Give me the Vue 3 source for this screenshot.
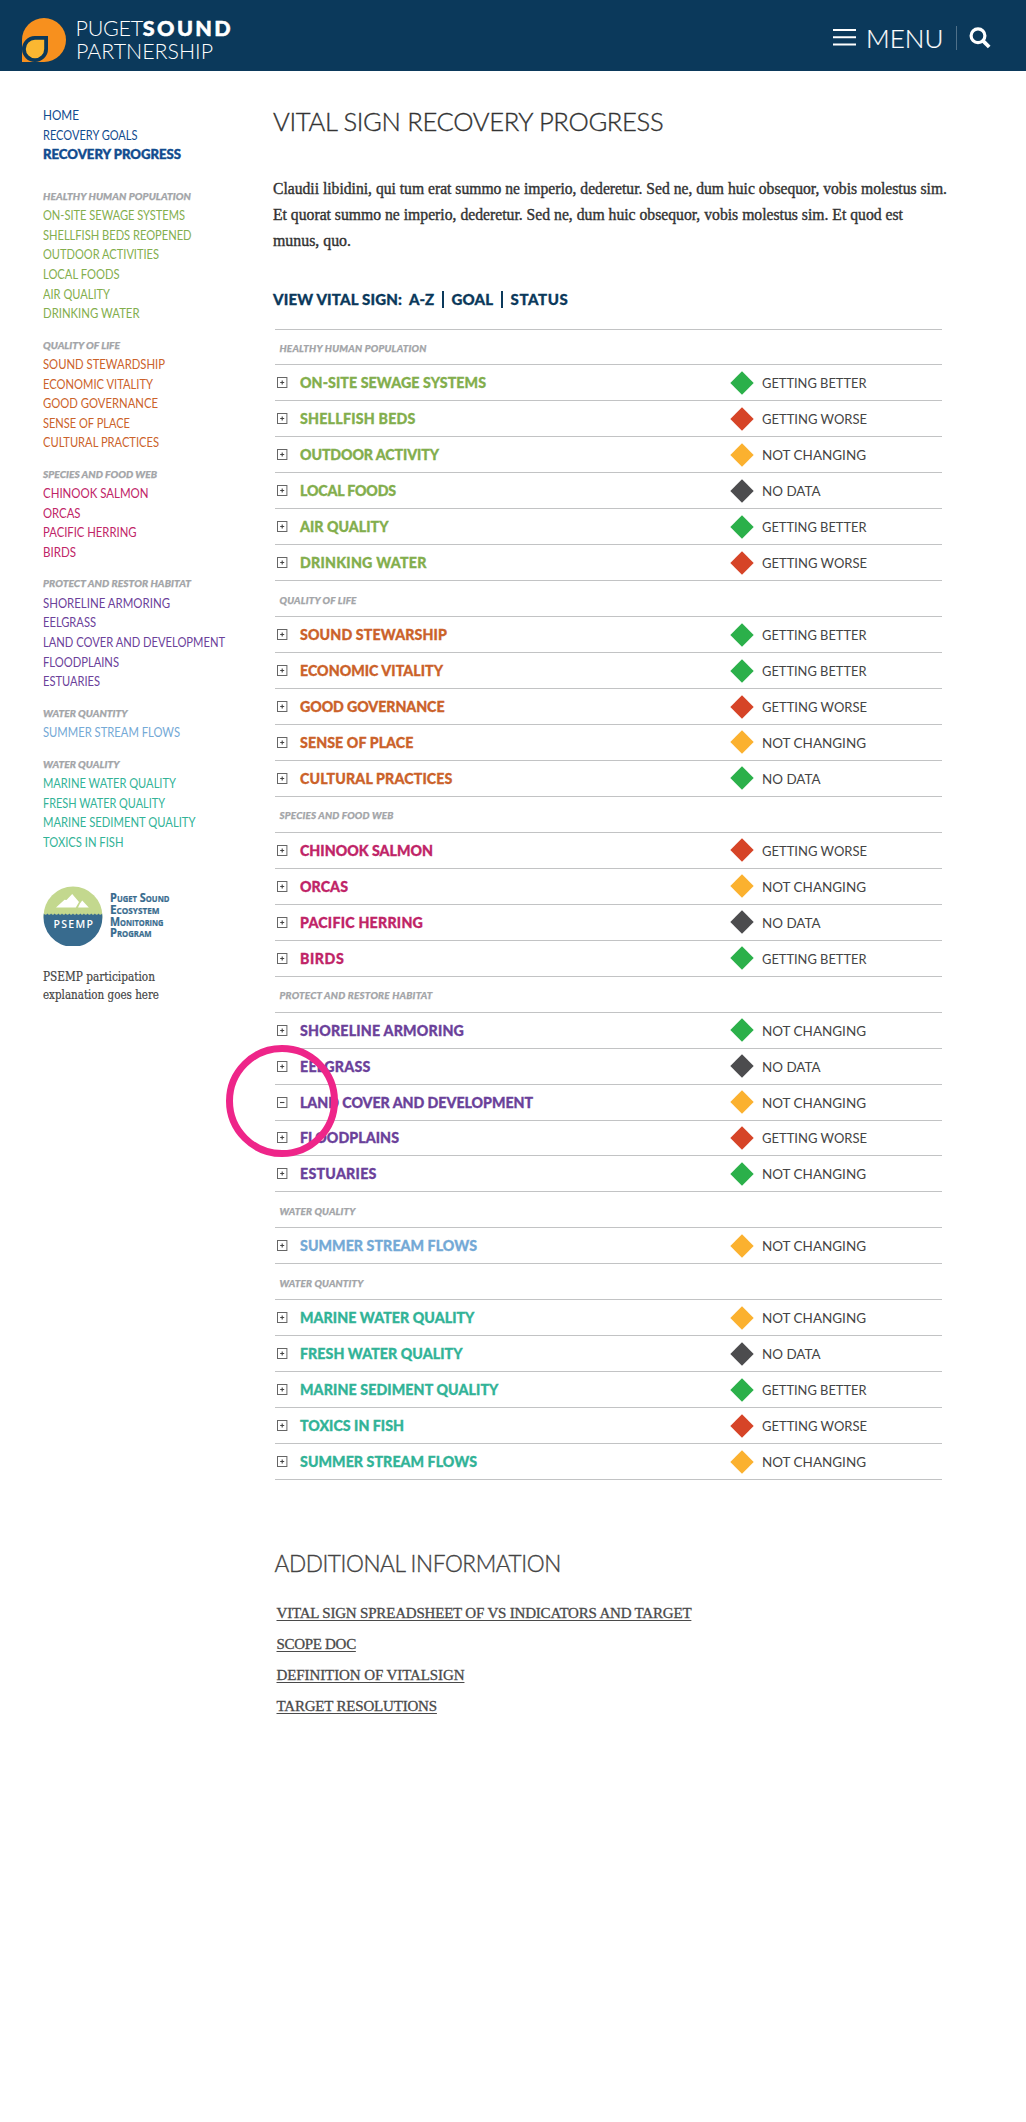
<script setup>
// Fits an element's text to the given width: by letter spacing,
// or with the "narrow" modifier by condensing the letters themselves.
const vFit = {
  mounted(el, { value, modifiers }) {
    const natural = el.getBoundingClientRect().width
    if (modifiers.narrow) {
      el.style.transform = `scaleX(${(value / natural).toFixed(4)})`
      return
    }
    const count = el.textContent.length
    el.style.letterSpacing = `${((value - natural) / (count - 0.5)).toFixed(3)}px`
  }
}

const topLinks = [
  { label: 'HOME', w: 36 },
  { label: 'RECOVERY GOALS', w: 94.5 },
  { label: 'RECOVERY PROGRESS', w: 138, current: true }
]

const sideGroups = [
  { title: 'HEALTHY HUMAN POPULATION', w: 148, tone: 'green', items: [
    ['ON-SITE SEWAGE SYSTEMS', 142], ['SHELLFISH BEDS REOPENED', 148.5], ['OUTDOOR ACTIVITIES', 116],
    ['LOCAL FOODS', 76.5], ['AIR QUALITY', 67], ['DRINKING WATER', 96.5]] },
  { title: 'QUALITY OF LIFE', w: 77, tone: 'orange', items: [
    ['SOUND STEWARDSHIP', 122], ['ECONOMIC VITALITY', 110], ['GOOD GOVERNANCE', 115],
    ['SENSE OF PLACE', 87], ['CULTURAL PRACTICES', 116]] },
  { title: 'SPECIES AND FOOD WEB', w: 114, tone: 'pink', items: [
    ['CHINOOK SALMON', 105.5], ['ORCAS', 37.5], ['PACIFIC HERRING', 93.5], ['BIRDS', 33]] },
  { title: 'PROTECT AND RESTOR HABITAT', w: 148, tone: 'purple', items: [
    ['SHORELINE ARMORING', 127], ['EELGRASS', 53], ['LAND COVER AND DEVELOPMENT', 182],
    ['FLOODPLAINS', 76], ['ESTUARIES', 57]] },
  { title: 'WATER QUANTITY', w: 84.5, tone: 'blue', items: [['SUMMER STREAM FLOWS', 137]] },
  { title: 'WATER QUALITY', w: 76.5, tone: 'teal', items: [
    ['MARINE WATER QUALITY', 133], ['FRESH WATER QUALITY', 122],
    ['MARINE SEDIMENT QUALITY', 152.5], ['TOXICS IN FISH', 80.5]] }
]

const statuses = {
  better: { label: 'GETTING BETTER', w: 104.5 },
  worse: { label: 'GETTING WORSE', w: 105 },
  same: { label: 'NOT CHANGING', w: 104 },
  none: { label: 'NO DATA', w: 58.5 }
}

// Each item: name, width, diamond colour, status
const signGroups = [
  { title: 'HEALTHY HUMAN POPULATION', w: 147, tone: 'green', items: [
    ['ON-SITE SEWAGE SYSTEMS', 186, 'd-green', 'better'], ['SHELLFISH BEDS', 115.5, 'd-red', 'worse'],
    ['OUTDOOR ACTIVITY', 139, 'd-amber', 'same'], ['LOCAL FOODS', 96, 'd-grey', 'none'],
    ['AIR QUALITY', 88.5, 'd-green', 'better'], ['DRINKING WATER', 126.5, 'd-red', 'worse']] },
  { title: 'QUALITY OF LIFE', w: 77, tone: 'orange', items: [
    ['SOUND STEWARSHIP', 147, 'd-green', 'better'], ['ECONOMIC VITALITY', 143, 'd-green', 'better'],
    ['GOOD GOVERNANCE', 144.5, 'd-red', 'worse'], ['SENSE OF PLACE', 113.5, 'd-amber', 'same'],
    ['CULTURAL PRACTICES', 152.5, 'd-green', 'none']] },
  { title: 'SPECIES AND FOOD WEB', w: 114, tone: 'pink', items: [
    ['CHINOOK SALMON', 133, 'd-red', 'worse'], ['ORCAS', 48, 'd-amber', 'same'],
    ['PACIFIC HERRING', 123, 'd-grey', 'none'], ['BIRDS', 44, 'd-green', 'better']] },
  { title: 'PROTECT AND RESTORE HABITAT', w: 153, tone: 'purple', items: [
    ['SHORELINE ARMORING', 164, 'd-green', 'same'], ['EELGRASS', 70.5, 'd-grey', 'none'],
    ['LAND COVER AND DEVELOPMENT', 233, 'd-amber', 'same', true], ['FLOODPLAINS', 99, 'd-red', 'worse'],
    ['ESTUARIES', 76.5, 'd-green', 'same']] },
  { title: 'WATER QUALITY', w: 76, tone: 'blue', items: [['SUMMER STREAM FLOWS', 177, 'd-amber', 'same']] },
  { title: 'WATER QUANTITY', w: 84, tone: 'teal', items: [
    ['MARINE WATER QUALITY', 174.5, 'd-amber', 'same'], ['FRESH WATER QUALITY', 162.5, 'd-grey', 'none'],
    ['MARINE SEDIMENT QUALITY', 198.5, 'd-green', 'better'], ['TOXICS IN FISH', 104, 'd-red', 'worse'],
    ['SUMMER STREAM FLOWS', 177, 'd-amber', 'same']] }
]

const paragraph = [
  ['Claudii libidini, qui tum erat summo ne imperio, dederetur. Sed ne, dum huic obsequor, vobis molestus sim.', 674],
  ['Et quorat summo ne imperio, dederetur. Sed ne, dum huic obsequor, vobis molestus sim. Et quod est', 630],
  ['munus, quo.', 78]
]

const docs = [
  ['VITAL SIGN SPREADSHEET OF VS INDICATORS AND TARGET', 415],
  ['SCOPE DOC', 79.5],
  ['DEFINITION OF VITALSIGN', 188],
  ['TARGET RESOLUTIONS', 160.5]
]
</script>

<template>
  <div class="page">
    <header class="bar">
      <a class="brand">
        <svg class="mark" width="44" height="44" viewBox="0 0 44 44">
          <path d="M0 22A22 22 0 1 1 22 44H0Z" fill="#f7901e" />
          <path d="M26 18V31.2A13 13 0 1 1 12.8 18Z" fill="#0b395b" />
          <path d="M22.2 21.8V31A9.2 9.2 0 1 1 13 21.8Z" fill="#fbb731" />
        </svg>
        <span class="wordmark">
          <span class="line"><span v-fit="67.5" class="t">PUGET</span><b v-fit="89" class="t">SOUND</b></span>
          <span class="line"><span v-fit.narrow="137" class="t">PARTNERSHIP</span></span>
        </span>
      </a>
      <div class="tools">
        <svg width="23" height="17" viewBox="0 0 23 17"><path d="M0 1h23M0 8.2h23M0 15.4h23" stroke="#fff" stroke-width="2" /></svg>
        <span class="menu"><span v-fit.narrow="77.5" class="t">MENU</span></span>
        <i class="divider"></i>
        <svg width="22" height="22" viewBox="0 0 22 22" fill="none" stroke="#fff">
          <circle cx="9" cy="8.7" r="6.9" stroke-width="3.2" />
          <path d="M13.8 13.6L20.2 20" stroke-width="3.8" />
        </svg>
      </div>
    </header>

    <div class="columns">
      <aside>
        <ul class="top">
          <li v-for="l in topLinks" :key="l.label" :class="{ current: l.current }"><span v-fit.narrow="l.w" class="t">{{ l.label }}</span></li>
        </ul>
        <section v-for="g in sideGroups" :key="g.title" class="group">
          <h4 class="label"><span v-fit="g.w" class="t">{{ g.title }}</span></h4>
          <ul :class="g.tone">
            <li v-for="i in g.items" :key="i[0]"><span v-fit.narrow="i[1]" class="t">{{ i[0] }}</span></li>
          </ul>
        </section>

        <div class="psemp">
          <svg width="60" height="60" viewBox="0 0 60 60">
            <circle cx="30" cy="30" r="29.4" fill="#c3d88e" />
            <path d="M.8 27.6q1.8 2.4 3.6 0q1.8 2.4 3.7 0q1.8 2.4 3.6 0q1.8 2.4 3.7 0q1.8 2.4 3.6 0q1.8 2.4 3.7 0q1.8 2.4 3.6 0q1.8 2.4 3.7 0q1.8 2.4 3.6 0q1.8 2.4 3.7 0q1.8 2.4 3.6 0q1.8 2.4 3.7 0q1.8 2.4 3.6 0q1.8 2.4 3.7 0q1.8 2.4 3.6 0q1.8 2.4 3.6 0A29.4 29.4 0 1 1 .8 27.6Z" fill="#386b8e" />
            <path d="M13 21.5L21.5 13.8L23.5 14L29.2 8L36 16L32.8 21.5Z" fill="#fff" />
            <path d="M35 21.5L37 17.5L39.2 14.6L45.8 21.5Z" fill="#fff" />
            <text x="10.5" y="42" textLength="39.5" class="acronym">PSEMP</text>
          </svg>
          <div class="program">
            <div><span v-fit.narrow="59.5" class="t">Puget Sound</span></div>
            <div><span v-fit.narrow="49.5" class="t">Ecosystem</span></div>
            <div><span v-fit.narrow="53.5" class="t">Monitoring</span></div>
            <div><span v-fit.narrow="41.5" class="t">Program</span></div>
          </div>
        </div>
        <p class="note">
          <span v-fit.narrow="112" class="t">PSEMP participation</span><br />
          <span v-fit.narrow="116" class="t">explanation goes here</span>
        </p>
      </aside>

      <main>
        <h1><span v-fit="390.5" class="t">VITAL SIGN RECOVERY PROGRESS</span></h1>
        <p class="intro"><template v-for="p in paragraph" :key="p[0]"><span v-fit.narrow="p[1]" class="t">{{ p[0] }}</span><br /></template></p>

        <div class="views">
          <span v-fit="129" class="t">VIEW VITAL SIGN:</span>
          <span v-fit="25" class="t az">A-Z</span><i></i>
          <span v-fit="41.5" class="t">GOAL</span><i></i>
          <span v-fit="57.5" class="t">STATUS</span>
        </div>

        <div class="signs">
          <template v-for="g in signGroups" :key="g.title">
            <h4 class="row label"><span v-fit="g.w" class="t">{{ g.title }}</span></h4>
            <div v-for="i in g.items" :key="i[0]" class="row">
              <span class="toggle">
                <svg width="11" height="11" viewBox="0 0 11 11" fill="none">
                  <rect x=".5" y=".5" width="9.4" height="10" stroke="#666" />
                  <path :d="i[4] ? 'M3 5.5h4.4' : 'M3.2 5.5h4M5.2 3.5v4'" stroke="#444" stroke-width="1.1" />
                </svg>
                <svg v-if="i[4]" class="ring" width="112" height="112" viewBox="0 0 112 112">
                  <circle cx="56" cy="56" r="52.5" fill="none" stroke="#ee2589" stroke-width="7" />
                </svg>
              </span>
              <span class="name" :class="g.tone"><span v-fit="i[1]" class="t">{{ i[0] }}</span></span>
              <svg class="diamond" :class="i[2]" width="24" height="24" viewBox="0 0 24 24"><path d="M12 .3L23.7 12L12 23.7L.3 12Z" /></svg>
              <span class="status"><span v-fit.narrow="statuses[i[3]].w" class="t">{{ statuses[i[3]].label }}</span></span>
            </div>
          </template>
        </div>

        <h2><span v-fit="286.5" class="t">ADDITIONAL INFORMATION</span></h2>
        <ul class="docs">
          <li v-for="d in docs" :key="d[0]"><a v-fit="d[1]" class="t">{{ d[0] }}</a></li>
        </ul>
      </main>
    </div>
  </div>
</template>

<style>
body { margin: 0; background: #fff; }
</style>

<style scoped>
.page { width: 1026px; min-height: 2122px; background: #fff; font-family: Lato, sans-serif; }
.t { display: inline-block; white-space: nowrap; font-kerning: normal; font-variant-ligatures: none; transform-origin: 0 50%; }
ul, h1, h2, h4, p { margin: 0; padding: 0; list-style: none; }

.bar { height: 71px; box-sizing: border-box; background: #0b395b; color: #fff; display: flex; justify-content: space-between; padding: 0 35.5px 0 22px; }
.brand { display: flex; padding-top: 18px; gap: 9.5px; }
.wordmark { font-size: 21.5px; font-weight: 300; line-height: 23px; margin-top: -1.5px; }
.line { display: flex; }
.line b { font-weight: 900; -webkit-text-stroke: .5px; }
.tools { display: flex; align-items: center; padding-top: 4px; }
.menu { font-size: 26px; font-weight: 300; line-height: 30px; margin-left: 10.5px; width: 89.5px; -webkit-text-stroke: .2px; }
.divider { width: 1px; height: 24px; background: #4f7089; margin-right: 12px; }

.columns { display: flex; padding: 34.4px 0 0 43px; }
aside { width: 230px; flex: none; }
aside li { height: 19.57px; line-height: 21.2px; font-size: 12.8px; white-space: nowrap; }
.top { color: #114b8e; padding-bottom: 22.8px; }
.top .current { font-weight: 900; font-size: 12.6px; line-height: 20px; -webkit-text-stroke: .4px; }
.group { padding-bottom: 13px; }
.label { font-size: 10.2px; font-weight: 900; font-style: italic; color: #a3a5a8; line-height: 18.4px; height: 18.4px; -webkit-text-stroke: .25px; }
.green { color: #83ae4d; }
.orange { color: #cb622a; }
.pink { color: #c02467; }
.purple { color: #6b419a; }
.blue { color: #74a9d6; }
.teal { color: #32b397; }

.psemp { display: flex; height: 60px; padding-top: 22px; gap: 6.5px; align-items: center; }
.psemp svg { flex: none; }
.acronym { font: 600 10.5px "Open Sans", sans-serif; fill: #fff; }
.program { color: #386b8e; font: 700 11.5px/11.7px "Open Sans", sans-serif; font-variant: small-caps; margin-top: -1px; -webkit-text-stroke: .2px; }
.note { font: 12px/18px "DejaVu Serif", serif; color: #444; margin-top: 21.5px; -webkit-text-stroke: .2px; }

main { flex: none; width: 690px; }
h1 { font-size: 25.6px; font-weight: 300; line-height: 30px; color: #333; margin-top: .6px; -webkit-text-stroke: .35px; }
.intro { font: 16.4px/26px "Liberation Serif", serif; color: #333; -webkit-text-stroke: .4px; margin-top: 40px; height: 78px; }
.views { display: flex; align-items: center; font-size: 15px; font-weight: 900; color: #0b395b; line-height: 20px; margin-top: 35px; -webkit-text-stroke: .3px; }
.az { margin-left: 7px; }
.views i { width: 1.5px; height: 17px; background: #0b395b; margin: 2px 8px 0 8px; }

.signs { margin: 20.5px 0 0 2px; width: 667px; border-top: 1px solid #c2c3c4; }
.row { display: flex; align-items: center; height: 35.96px; box-sizing: border-box; border-bottom: 1px solid #c2c3c4; position: relative; }
.row.label { padding: 2px 0 0 4.5px; line-height: 18px; font-size: 9.9px; }
.row.label:first-child { height: 35px; }
.toggle { position: relative; display: flex; width: 25px; padding-left: 2px; box-sizing: border-box; flex: none; }
.ring { position: absolute; left: -49px; top: -51.5px; z-index: 2; }
.name { width: 429.5px; font-size: 14.2px; font-weight: 900; -webkit-text-stroke: .3px; }
.diamond { flex: none; margin-right: 8.5px; }
.status { font-size: 13.8px; color: #444; }
.d-green { fill: #2bb04a; }
.d-red { fill: #d64427; }
.d-amber { fill: #fbb12f; }
.d-grey { fill: #4c4c4e; }

h2 { font-size: 22.6px; font-weight: 300; line-height: 28px; color: #444; -webkit-text-stroke: .35px; margin: 70px 0 0 1.5px; }
.docs { margin: 20px 0 0 3.5px; }
.docs li { height: 31px; line-height: 31px; font-family: "Liberation Serif", serif; font-size: 15px; color: #4a4a4a; -webkit-text-stroke: .3px; }
.docs a { text-decoration: underline; text-decoration-thickness: 1px; text-underline-offset: 1.5px; }
</style>
